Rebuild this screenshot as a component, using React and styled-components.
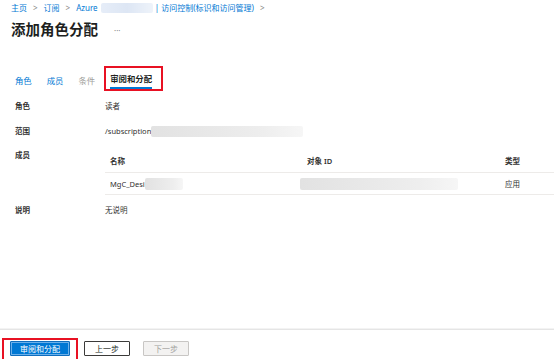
import React from "react";
import styled, { createGlobalStyle } from "styled-components";

const Global = createGlobalStyle`
  html, body { margin: 0; padding: 0; background: #fff; }
  body {
    font-family: "Segoe UI", "Noto Sans", "Noto Sans CJK SC", sans-serif;
    color: #323130;
  }
`;

const Page = styled.div`
  width: 554px;
  height: 359px;
  display: flex;
  flex-direction: column;
  overflow: hidden;
`;

const Header = styled.header`
  padding: 3px 0 0 11px;
`;

const Breadcrumb = styled.nav`
  display: flex;
  align-items: center;
  height: 10px;
  font-size: 8px;
  line-height: 10px;
  color: #0078d4;
`;

const Crumb = styled.span`
  color: #0078d4;
  white-space: nowrap;
`;

const Sep = styled.span`
  color: #8a8886;
  margin: 0 6px;
  font-size: 8px;
`;

const Blur = styled.span`
  display: inline-block;
  width: ${(p) => p.$w}px;
  height: ${(p) => p.$h || 11}px;
  margin-left: ${(p) => p.$ml || 0}px;
  vertical-align: middle;
  border-radius: 2px;
  background: ${(p) =>
    p.$blue
      ? "linear-gradient(90deg, #e6edf8 0%, #dde6f4 50%, #eef3fa 100%)"
      : "linear-gradient(90deg, #e2e2e2 0%, #e9e9e9 45%, #eeeeee 75%, #f6f6f6 100%)"};
  filter: blur(0.6px);
`;

const TitleRow = styled.div`
  display: flex;
  align-items: center;
  gap: 16px;
  margin-top: 7px;
  height: 18px;
`;

const Title = styled.h1`
  margin: 0;
  font-family: "Noto Sans CJK SC", "Noto Sans", sans-serif;
  font-size: 14.5px;
  font-weight: 700;
  color: #201f1e;
  line-height: 18px;
`;

const More = styled.span`
  font-size: 8px;
  color: #8a8886;
  margin-top: 2px;
`;

const TabList = styled.div`
  display: flex;
  align-items: flex-end;
  gap: 15px;
  padding-left: 15px;
  margin-top: 28px;
`;

const Tab = styled.div`
  font-family: "Noto Sans CJK SC", sans-serif;
  font-size: 8.4px;
  line-height: 12px;
  padding: 4px 0 3px;
  color: ${(p) => (p.$active ? "#201f1e" : p.$disabled ? "#a19f9d" : "#0078d4")};
  font-weight: ${(p) => (p.$active ? 600 : 400)};
  border-bottom: 2px solid ${(p) => (p.$active ? "#0078d4" : "transparent")};
  white-space: nowrap;
`;

const Highlight = styled.div`
  border: 2px solid #e81123;
  padding: ${(p) => p.$pad};
  margin-left: ${(p) => p.$ml || 0}px;
  display: flex;
  gap: 6px;
  align-items: center;
`;

const Content = styled.section`
  display: flex;
  flex-direction: column;
  padding: 9px 0 0 15px;
`;

const Row = styled.div`
  display: grid;
  grid-template-columns: 90px 1fr;
  align-items: start;
  margin-top: ${(p) => p.$mt}px;
`;

const Label = styled.div`
  font-family: "Noto Sans CJK SC", sans-serif;
  font-size: 7.5px;
  line-height: 12px;
  font-weight: 600;
  color: #323130;
`;

const Value = styled.div`
  font-size: 7.5px;
  line-height: 12px;
  color: #323130;
  display: flex;
  align-items: center;
  white-space: nowrap;
`;

const Table = styled.div`
  display: flex;
  flex-direction: column;
`;

const TRow = styled.div`
  display: grid;
  grid-template-columns: 197px 198px 1fr;
  align-items: center;
  height: ${(p) => p.$h}px;
  border-bottom: 1px solid #edebe9;
  box-sizing: border-box;
`;

const Cell = styled.div`
  padding-left: 5px;
  font-size: 7.5px;
  line-height: 12px;
  font-weight: ${(p) => (p.$head ? 600 : 400)};
  color: #323130;
  display: flex;
  align-items: center;
  white-space: nowrap;
`;

const Footer = styled.footer`
  margin-top: auto;
  border-top: 1px solid #e5e5e5;
  box-shadow: 0 -1px 0 #f3f3f3;
  padding: 8px 0 0 2px;
  height: 30px;
  box-sizing: border-box;
  display: flex;
  align-items: flex-start;
  gap: 6px;
`;

const Button = styled.button`
  box-sizing: border-box;
  width: ${(p) => p.$w}px;
  height: 15px;
  padding: 0;
  font-family: "Noto Sans CJK SC", sans-serif;
  font-size: 8px;
  line-height: 13px;
  border-radius: 1px;
  margin-left: ${(p) => p.$ml || 0}px;
  margin-top: ${(p) => p.$mt || 0}px;
  cursor: pointer;
  ${(p) =>
    p.$variant === "primary"
      ? `background:#0078d4;color:#fff;border:1px solid #106ebe;box-shadow: inset 0 0 0 1px #6cb0ea;`
      : p.$variant === "disabled"
      ? `background:#f3f2f1;color:#a19f9d;border:1px solid #c8c6c4;`
      : `background:#fff;color:#201f1e;border:1px solid #3b3a39;`}
`;

export default function App() {
  return (
    <Page>
      <Global />
      <Header>
        <Breadcrumb>
          <Crumb>主页</Crumb>
          <Sep>&gt;</Sep>
          <Crumb>订阅</Crumb>
          <Sep>&gt;</Sep>
          <Crumb>Azure</Crumb>
          <Blur $blue $w={52} $h={10} $ml={3} />
          <Crumb>&nbsp;| 访问控制(标识和访问管理)</Crumb>
          <Sep>&gt;</Sep>
        </Breadcrumb>
        <TitleRow>
          <Title>添加角色分配</Title>
          <More>···</More>
        </TitleRow>
      </Header>

      <TabList>
        <Tab>角色</Tab>
        <Tab>成员</Tab>
        <Tab $disabled>条件</Tab>
        <Highlight $pad="0 9px 0 4px" $ml={-6}>
          <Tab $active>审阅和分配</Tab>
        </Highlight>
      </TabList>

      <Content>
        <Row $mt={0}>
          <Label>角色</Label>
          <Value>读者</Value>
        </Row>
        <Row $mt={13}>
          <Label>范围</Label>
          <Value>
            /subscription
            <Blur $w={152} $h={11} />
          </Value>
        </Row>
        <Row $mt={12}>
          <Label>成员</Label>
          <Table>
            <TRow $h={24}>
              <Cell $head>名称</Cell>
              <Cell $head>对象 ID</Cell>
              <Cell $head>类型</Cell>
            </TRow>
            <TRow $h={22}>
              <Cell>
                MgC_Desi
                <Blur $w={38} $h={12} />
              </Cell>
              <Cell>
                <Blur $w={158} $h={12} $ml={-7} />
              </Cell>
              <Cell>应用</Cell>
            </TRow>
          </Table>
        </Row>
        <Row $mt={9}>
          <Label>说明</Label>
          <Value>无说明</Value>
        </Row>
      </Content>

      <Footer>
        <Highlight $pad="1px 6px 4px 6px">
          <Button $variant="primary" $w={60}>审阅和分配</Button>
        </Highlight>
        <Button $w={46} $mt={3}>上一步</Button>
        <Button $variant="disabled" $w={46} $ml={7} $mt={3}>下一步</Button>
      </Footer>
    </Page>
  );
}
